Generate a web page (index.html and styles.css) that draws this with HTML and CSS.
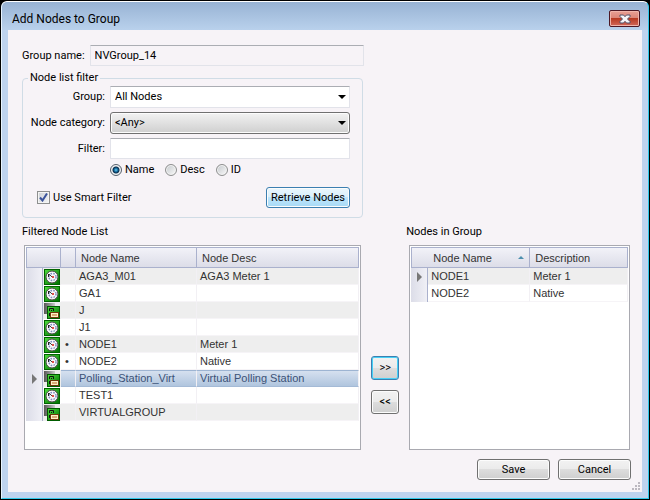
FILE: index.html
```
<!DOCTYPE html>
<html lang="en">
<head>
  <meta charset="UTF-8">
  <meta name="viewport" content="width=device-width, initial-scale=1.0">
  <title>Add Nodes to Group</title>
  <link rel="stylesheet" href="styles.css">
</head>
<body>
  <!-- Shared icons -->
  <svg class="sprite" aria-hidden="true">
    <defs>
      <linearGradient id="green" x1="0" y1="0" x2="1" y2="1">
        <stop offset="0" stop-color="#4cd83c"/>
        <stop offset="1" stop-color="#007400"/>
      </linearGradient>
      <linearGradient id="gray" x1="0" y1="0" x2="1" y2="0">
        <stop offset="0" stop-color="#555"/>
        <stop offset="1" stop-color="#ccc"/>
      </linearGradient>
    </defs>
    <symbol id="icon-meter" viewBox="0 0 16 16">
      <rect width="16" height="16" fill="#006400"/>
      <rect x="1" y="1" width="14" height="14" fill="url(#green)"/>
      <circle cx="8" cy="8" r="6" fill="#f8f8f8" stroke="#444" stroke-width="1"/>
      <circle cx="8.500" cy="8" r="3.500" fill="none" stroke="#8090c0" stroke-width="1.500" stroke-dasharray="1.600 1.200"/>
      <path d="M4 5h2v1H5v2H4z" fill="#222"/>
      <path d="M5 5l3.500 3.500" stroke="#444"/>
      <rect x="8" y="7" width="2" height="2" fill="#e0504c"/>
    </symbol>
    <symbol id="icon-group" viewBox="0 0 16 16">
      <rect width="11" height="11" fill="url(#gray)"/>
      <rect x="3" y="3" width="13" height="13" fill="#005c00"/>
      <rect x="4" y="4" width="11" height="11" fill="url(#green)"/>
      <path d="M5.500 8V5.500h4V8" fill="none" stroke="#111"/>
      <path d="M7 7h1v1H7zM5 10h1v3H5z" fill="#111"/>
      <rect x="6.500" y="9.500" width="8" height="5" fill="#fff0c8" stroke="#70380c"/>
      <path d="M8 12h5" stroke="#b86820"/>
    </symbol>
  </svg>

  <div class="window">
    <div class="title-bar">
      <h1>Add Nodes to Group</h1>
      <button type="button" class="close-button" aria-label="Close">
        <svg width="12" height="10" viewBox="0 0 12 10">
          <path d="M1 1h3.500L6 2.700 7.500 1H11v1.500L8.500 5 11 7.500V9H7.500L6 7.300 4.500 9H1V7.500L3.500 5 1 2.500z" fill="#f5f5f8" stroke="#50536b"/>
        </svg>
      </button>
    </div>

    <form class="content">
      <div class="top-pane">
        <div class="name-row">
          <label for="group-name">Group name:</label>
          <input type="text" class="text-box" id="group-name" value="NVGroup_14" readonly>
        </div>

        <fieldset class="filter-box">
          <legend>Node list filter</legend>
          <div class="filter-grid">
            <label for="group">Group:</label>
            <div class="select-wrap">
              <select class="select-flat" id="group"><option>All Nodes</option></select>
            </div>
            <label for="category">Node category:</label>
            <div class="select-wrap">
              <select class="select-raised" id="category"><option>&lt;Any&gt;</option></select>
            </div>
            <label for="filter">Filter:</label>
            <input type="text" class="text-box" id="filter">
          </div>
          <div class="radio-row">
            <label><input type="radio" name="filter-by" checked>Name</label>
            <label><input type="radio" name="filter-by">Desc</label>
            <label><input type="radio" name="filter-by">ID</label>
          </div>
          <div class="filter-footer">
            <label class="smart-filter">
              <span class="check-wrap">
                <input type="checkbox" checked>
                <svg class="tick" width="9" height="9" viewBox="0 0 9 9"><path d="M1 4.500L3.500 7.500L8 0.500" fill="none" stroke="#3b539b" stroke-width="2"/></svg>
              </span>
              Use Smart Filter
            </label>
            <button type="button" class="button button-hot">Retrieve Nodes</button>
          </div>
        </fieldset>
      </div>

      <div class="lists">
        <section class="list-pane filtered-pane">
          <h2>Filtered Node List</h2>
          <div class="list-box">
            <table class="grid">
              <colgroup>
                <col class="col-marker"><col class="col-icon"><col class="col-dot"><col class="col-name"><col>
              </colgroup>
              <thead>
                <tr><th colspan="2"></th><th></th><th>Node Name</th><th>Node Desc</th></tr>
              </thead>
              <tbody>
                <tr><td class="marker"></td><td class="icon"><svg><use href="#icon-meter"/></svg></td><td class="dot"></td><td>AGA3_M01</td><td>AGA3 Meter 1</td></tr>
                <tr><td class="marker"></td><td class="icon"><svg><use href="#icon-meter"/></svg></td><td class="dot"></td><td>GA1</td><td></td></tr>
                <tr><td class="marker"></td><td class="icon"><svg><use href="#icon-group"/></svg></td><td class="dot"></td><td>J</td><td></td></tr>
                <tr><td class="marker"></td><td class="icon"><svg><use href="#icon-meter"/></svg></td><td class="dot"></td><td>J1</td><td></td></tr>
                <tr><td class="marker"></td><td class="icon"><svg><use href="#icon-meter"/></svg></td><td class="dot">•</td><td>NODE1</td><td>Meter 1</td></tr>
                <tr><td class="marker"></td><td class="icon"><svg><use href="#icon-meter"/></svg></td><td class="dot">•</td><td>NODE2</td><td>Native</td></tr>
                <tr class="selected"><td class="marker"><span class="arrow"></span></td><td class="icon"><svg><use href="#icon-group"/></svg></td><td class="dot"></td><td>Polling_Station_Virt</td><td>Virtual Polling Station</td></tr>
                <tr><td class="marker"></td><td class="icon"><svg><use href="#icon-meter"/></svg></td><td class="dot"></td><td>TEST1</td><td></td></tr>
                <tr><td class="marker"></td><td class="icon"><svg><use href="#icon-group"/></svg></td><td class="dot"></td><td>VIRTUALGROUP</td><td></td></tr>
              </tbody>
            </table>
          </div>
        </section>

        <div class="move-buttons">
          <button type="button" class="button button-default" aria-label="Add to group">&gt;&gt;</button>
          <button type="button" class="button" aria-label="Remove from group">&lt;&lt;</button>
        </div>

        <section class="list-pane group-pane">
          <h2>Nodes in Group</h2>
          <div class="list-box">
            <table class="grid">
              <colgroup>
                <col class="col-marker"><col class="col-member"><col>
              </colgroup>
              <thead>
                <tr><th colspan="2" class="sorted"><span class="sort-head">Node Name<span class="sort-arrow"></span></span></th><th>Description</th></tr>
              </thead>
              <tbody>
                <tr><td class="marker"><span class="arrow"></span></td><td>NODE1</td><td>Meter 1</td></tr>
                <tr><td class="marker"></td><td>NODE2</td><td>Native</td></tr>
              </tbody>
            </table>
          </div>
        </section>
      </div>

      <div class="footer">
        <button type="button" class="button">Save</button>
        <button type="button" class="button">Cancel</button>
      </div>
      <svg class="grip" width="8" height="8" viewBox="0 0 8 8" aria-hidden="true">
        <path d="M6 0h2v2H6zM3 3h2v2H3zM6 3h2v2H6zM0 6h2v2H0zM3 6h2v2H3zM6 6h2v2H6z" fill="#bcb8c0"/>
      </svg>
    </form>
  </div>
</body>
</html>
```

FILE: styles.css
```
* {
  box-sizing: border-box;
}

body {
  margin: 0;
  min-height: 100vh;
  display: flex;
  background-color: #000;
  font-family: Roboto, "Open Sans", sans-serif;
  font-size: 11px;
  line-height: 16px;
  color: #000;
}

.sprite {
  position: absolute;
  width: 0;
  height: 0;
}

input, select, button {
  font: inherit;
  color: inherit;
  margin: 0;
}

h1, h2 {
  margin: 0;
  font-weight: normal;
}

/* Window frame */
.window {
  flex: 1;
  display: flex;
  flex-direction: column;
  margin: 1px;
  padding: 0 6px 6px;
  border: 1px solid #2fc8ea;
  border-top-color: #fff;
  border-left-color: #e8f4ff;
  border-radius: 6px 6px 0 0;
  background: #bed3ef linear-gradient(#98b3d4, #b9d1ec) no-repeat 0 0 / 100% 28px;
}

.title-bar {
  display: flex;
  justify-content: space-between;
  align-items: center;
  height: 28px;
  padding: 5px 2px 0 4px;
}

.title-bar h1 {
  font-size: 12px;
  line-height: 16px;
}

.close-button {
  display: flex;
  align-items: center;
  justify-content: center;
  width: 31px;
  height: 17px;
  padding: 0;
  border: 1px solid #4c1824;
  border-radius: 2px;
  box-shadow: inset 0 0 0 1px #f0b4aa;
  background: linear-gradient(#e8a095 0%, #dc8577 48%, #b83a22 50%, #d1685a 100%);
}

.content {
  position: relative;
  flex: 1;
  display: flex;
  flex-direction: column;
  padding: 15px 11px 12px 14px;
  background-color: #f7f3f7;
}

/* Group name and filter */
.top-pane {
  width: 342px;
}

.name-row {
  display: flex;
  align-items: center;
  gap: 5px;
}

.name-row .text-box {
  flex: 1;
  background-color: #f7f3f7;
}

.text-box {
  min-width: 0;
  height: 21px;
  padding: 0 4px;
  border: 1px solid #e2e3ea;
  border-top-color: #abadb3;
  border-radius: 1px;
  background-color: #fff;
}

.filter-box {
  min-width: 0;
  margin: 4px 1px 0 0;
  padding: 0 12px 9px 7px;
  border: 1px solid #d0dce6;
  border-radius: 4px;
}

.filter-box legend {
  padding: 0 2px;
  margin-left: -2px;
}

.filter-grid {
  display: grid;
  grid-template-columns: 75px 1fr;
  gap: 4px 5px;
  align-items: center;
}

.filter-grid > label {
  text-align: right;
  white-space: nowrap;
}

.select-wrap {
  position: relative;
  display: flex;
}

.select-wrap::after {
  content: "";
  position: absolute;
  right: 4px;
  top: 50%;
  margin-top: -2px;
  border: 4px solid transparent;
  border-top-color: #000;
  border-bottom: 0;
  pointer-events: none;
}

.select-wrap select {
  flex: 1;
  height: 22px;
  padding: 0 4px;
  appearance: none;
}

.select-flat {
  border: 1px solid #e2e3ea;
  border-top-color: #abadb3;
  background-color: #fff;
}

.select-raised {
  border: 1px solid #707070;
  border-radius: 3px;
  box-shadow: inset 0 0 0 1px #fcfcfc;
  background: linear-gradient(#f2f2f2, #cfcfcf);
}

.radio-row {
  display: flex;
  gap: 11px;
  margin: 3px 0 9px 80px;
}

.radio-row label,
.smart-filter {
  display: flex;
  align-items: center;
  gap: 3px;
}

.radio-row input {
  appearance: none;
  width: 12px;
  height: 12px;
  border: 1px solid #8e8f8f;
  border-radius: 50%;
  box-shadow: inset 0 0 0 1px #f4f4f4;
  background: linear-gradient(135deg, #c4c8cc, #fafafa);
}

.radio-row input:checked {
  border-color: #56606c;
  background: radial-gradient(circle at 5px 5px, #6cd0f4 0, #0e5f92 2px, #0b2c4a 3px, #e4e8ec 4px);
}

.filter-footer {
  display: flex;
  justify-content: space-between;
  align-items: center;
  margin-left: 7px;
}

.check-wrap {
  position: relative;
  display: flex;
}

.check-wrap input {
  appearance: none;
  width: 13px;
  height: 13px;
  border: 1px solid #8e8f8f;
  box-shadow: inset 0 0 0 1px #f4f4f4;
  background: linear-gradient(135deg, #ccd0d6, #f6f6f6);
}

.tick {
  position: absolute;
  left: 2px;
  top: 2px;
  pointer-events: none;
}

.check-wrap input:not(:checked) + .tick {
  display: none;
}

/* Buttons */
.button {
  height: 21px;
  padding: 0 3px;
  border: 1px solid #707070;
  border-radius: 3px;
  box-shadow: inset 0 0 0 1px #fcfcfc;
  background: linear-gradient(#f2f2f2 0%, #ebebeb 48%, #dddddd 50%, #cfcfcf 100%);
  white-space: nowrap;
}

.button-hot {
  width: 84px;
  border-color: #3c7fb1;
  background: linear-gradient(#eaf6fd 0%, #d9f0fc 48%, #bee6fd 50%, #a7d9f5 100%);
}

.button-default {
  border-color: #3c7fb1;
  box-shadow: inset 0 0 0 1px #46d0f6;
}

/* Node lists */
.lists {
  flex: 1;
  display: flex;
  margin-top: 6px;
}

.list-pane {
  display: flex;
  flex-direction: column;
}

.filtered-pane {
  flex: 339 1 0;
}

.filtered-pane .list-box {
  margin-left: 2px;
}

.group-pane {
  flex: 224 1 0;
}

.group-pane .list-box {
  margin-left: 3px;
}

.list-pane h2 {
  font-size: 11px;
  line-height: 16px;
  margin-bottom: 5px;
}

.list-box {
  flex: 1;
  min-height: 200px;
  margin-right: 1px;
  padding: 1px;
  border: 1px solid #a9a9b0;
  background-color: #fff;
}

.grid {
  width: 100%;
  table-layout: fixed;
  border-collapse: separate;
  border-spacing: 0;
  font-family: "Liberation Sans", Arial, sans-serif;
  font-size: 11px;
  line-height: 16px;
  color: #333;
}

.col-marker {
  width: 17px;
}

.col-icon {
  width: 18px;
}

.col-dot {
  width: 15px;
}

.col-name {
  width: 121px;
}

.col-member {
  width: 102px;
}

.grid th {
  height: 21px;
  padding: 0 5px;
  border: 1px solid #aab1cd;
  border-left-width: 0;
  background: linear-gradient(#f2f2f8, #dcdde8);
  font-weight: normal;
  text-align: left;
}

.grid th:first-child {
  border-left-width: 1px;
}

.grid th.sorted {
  padding: 0 5px 0 21px;
}

.sort-head {
  display: flex;
  align-items: center;
  justify-content: space-between;
}

.sort-arrow {
  border: 3px solid transparent;
  border-bottom-color: #4d8fae;
  border-top: 0;
}

.grid td {
  height: 17px;
  padding: 0 3px;
  border-right: 1px solid #f2f0f4;
  border-bottom: 1px solid #f6f4f7;
  line-height: 15px;
  white-space: nowrap;
}

.grid tbody tr:nth-child(odd) td {
  background-color: #eeeeee;
}

.grid tbody .marker {
  padding: 0 0 0 6px;
  border-right-color: #aab1cd;
  border-bottom: 0;
  background: linear-gradient(to right, #dcdde8, #f0f0f6);
}

.arrow {
  display: block;
  width: 5px;
  border: 5px solid transparent;
  border-left-color: #777;
  border-right: 0;
}

.grid tbody .icon {
  padding: 0 1px;
  background-color: #fff;
  border: 0;
}

.icon svg {
  display: block;
  width: 16px;
  height: 16px;
}

.grid .dot {
  padding: 0 4px;
}

.grid tbody tr.selected td:not(.marker, .icon) {
  border-top: 1px solid #9db4d2;
  border-bottom-color: #a4bad6;
  background: linear-gradient(#d5e0ef, #b0c5de);
  color: #3b5277;
}

/* Move and dialog buttons */
.move-buttons {
  display: flex;
  flex-direction: column;
  gap: 10px;
  padding: 132px 7px 0 9px;
}

.move-buttons .button {
  width: 28px;
  height: 24px;
}

.footer {
  display: flex;
  justify-content: flex-end;
  gap: 8px;
  margin-top: 9px;
}

.footer .button {
  width: 73px;
}

.grip {
  position: absolute;
  right: 2px;
  bottom: 2px;
}
```
